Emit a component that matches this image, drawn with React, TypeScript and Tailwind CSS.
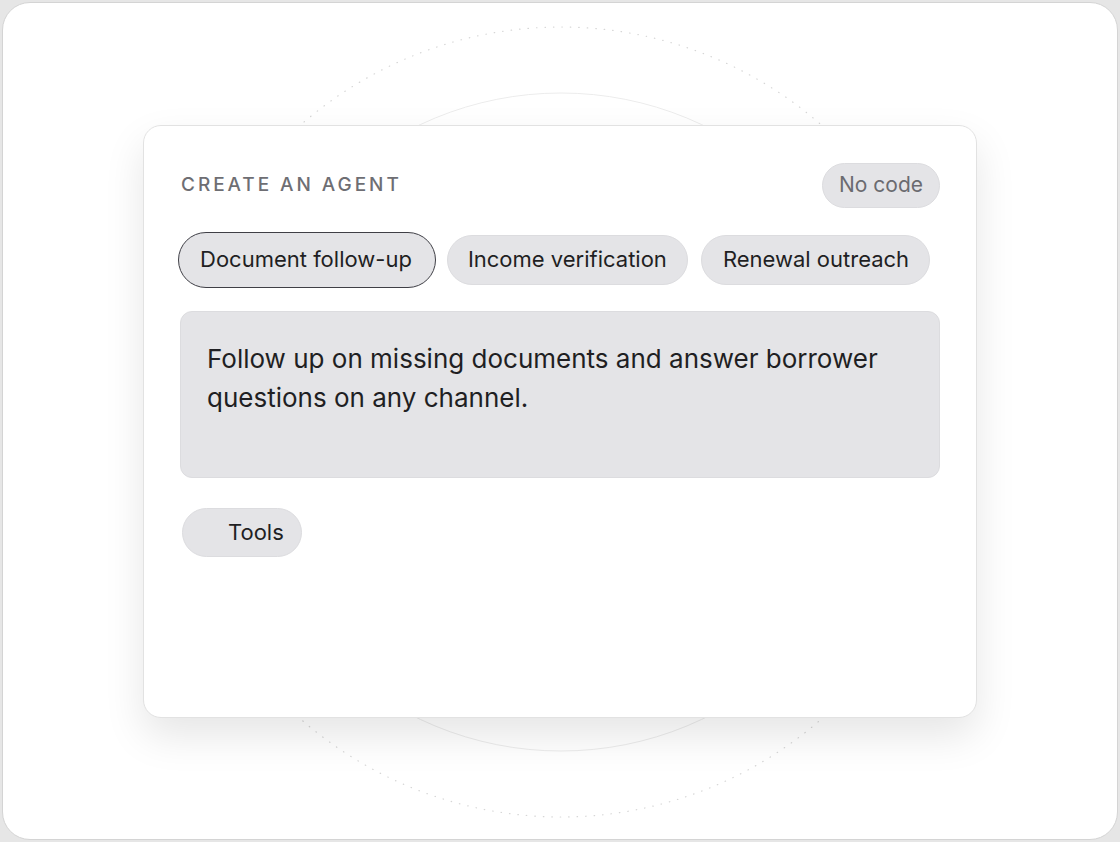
import React from "react";

export default function App() {
  return (
    <div
      className="w-[1120px] h-[842px] bg-[#e6e6e6] p-[2px]"
      style={{ fontFamily: "Inter, 'Noto Sans', sans-serif" }}
    >
      <div className="relative h-full w-full rounded-[28px] border border-[#d4d4d4] bg-white overflow-hidden flex items-center justify-center">
        <svg
          className="absolute inset-0 pointer-events-none"
          width="1116"
          height="838"
          viewBox="0 0 1116 838"
        >
          <circle
            cx="558"
            cy="419"
            r="395"
            fill="none"
            stroke="#d6d6d6"
            strokeWidth="1.2"
            strokeDasharray="0.5 8"
            strokeLinecap="round"
          />
          <circle cx="558" cy="419" r="329" fill="none" stroke="#ececec" strokeWidth="1" />
        </svg>
        <div className="relative w-[834px] h-[593px] rounded-[18px] border border-[#e2e2e2] bg-white px-[36px] pt-[37px] shadow-[0_18px_40px_rgba(0,0,0,0.10)]">
          <div className="flex items-center justify-between">
            <div className="pl-[1px] pt-[1px] text-[19px] font-medium tracking-[0.155em] text-[#6e6e73] uppercase">
              Create an agent
            </div>
            <div className="h-[45px] px-[16px] rounded-full border border-[#dcdcdf] bg-[#e4e4e7] flex items-center text-[21px] text-[#6b6b70]">
              No code
            </div>
          </div>
          <div className="mt-[24px] flex items-center h-[56px]">
            <div className="-ml-[2px] h-[56px] pl-[21px] pr-[23px] rounded-full border-[1.5px] border-[#3f3f46] bg-[#e4e4e7] flex items-center text-[22px] text-[#1f1f23]">
              Document follow-up
            </div>
            <div className="ml-[11px] h-[50px] px-[20px] rounded-full border border-[#dcdcdf] bg-[#e4e4e7] flex items-center text-[22px] text-[#1f1f23]">
              Income verification
            </div>
            <div className="ml-[13px] h-[50px] pl-[21px] pr-[20px] rounded-full border border-[#dcdcdf] bg-[#e4e4e7] flex items-center text-[22px] text-[#1f1f23]">
              Renewal outreach
            </div>
          </div>
          <div className="mt-[23px] h-[167px] rounded-[12px] border border-[#dcdcdf] bg-[#e4e4e7] px-[26px] pt-[27px] text-[26px] leading-[39px] text-[#1f1f23]">
            Follow up on missing documents and answer borrower questions on any channel.
          </div>
          <div className="mt-[30px] flex">
            <div className="ml-[2px] h-[49px] pl-[45px] pr-[17px] rounded-full border border-[#dcdcdf] bg-[#e4e4e7] flex items-center text-[22px] text-[#1f1f23]">
              Tools
            </div>
          </div>
        </div>
      </div>
    </div>
  );
}
